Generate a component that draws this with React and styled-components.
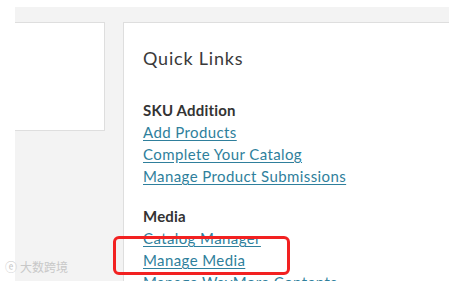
import styled, { createGlobalStyle } from "styled-components";

const GlobalStyle = createGlobalStyle`
  html, body {
    margin: 0;
    padding: 0;
    background: #ffffff;
    height: 100%;
    overflow: hidden;
  }
  #root {
    height: 100%;
  }
`;

const linkColour = "#2f7f9c";
const textColour = "#333333";
const borderColour = "#dedede";

const sections = [
  {
    title: "SKU Addition",
    links: ["Add Products", "Complete Your Catalog", "Manage Product Submissions"],
  },
  {
    title: "Media",
    links: ["Catalog Manager", "Manage Media", "Manage WayMore Contents"],
  },
];

const App = () => {
  return (
    <>
      <GlobalStyle />
      <Page>
        <Panel>
          <SideCard />
          <LinksCard>
            <Heading>Quick Links</Heading>
            {sections.map((section) => (
              <Section key={section.title}>
                <SectionTitle>{section.title}</SectionTitle>
                {section.links.map((link) => (
                  <LinkItem key={link} href="#">
                    {link}
                  </LinkItem>
                ))}
              </Section>
            ))}
            <Highlight />
          </LinksCard>
        </Panel>
        <Watermark>
          <WatermarkIcon>ⓔ</WatermarkIcon>大数跨境
        </Watermark>
      </Page>
    </>
  );
};

// Page styles
const Page = styled.div`
  position: relative;
  height: 100%;
  padding: 7px 20px 0 15px;
  box-sizing: border-box;
  font-family: Lato, "Liberation Sans", sans-serif;
`;

const Panel = styled.div`
  display: flex;
  align-items: flex-start;
  gap: 18px;
  height: 100%;
  padding-top: 15px;
  box-sizing: border-box;
  background: #f3f3f3;
`;

// Card styles
const SideCard = styled.div`
  width: 89px;
  height: 107px;
  background: #ffffff;
  border: 1px solid ${borderColour};
  border-left: none;
`;

const LinksCard = styled.div`
  position: relative;
  flex: 1;
  height: 100%;
  padding: 24px 0 0 19px;
  box-sizing: border-box;
  background: #ffffff;
  border-top: 1px solid ${borderColour};
  border-left: 1px solid ${borderColour};
`;

const Heading = styled.h2`
  margin: 0 0 31px;
  font-size: 18px;
  line-height: 22px;
  font-weight: 400;
  letter-spacing: 0.8px;
  color: #3a3a3a;
`;

const Section = styled.div`
  display: flex;
  flex-direction: column;
  align-items: flex-start;
  margin-bottom: 19px;
`;

const SectionTitle = styled.h3`
  margin: 0;
  font-size: 15px;
  line-height: 21px;
  font-weight: 700;
  letter-spacing: 0.2px;
  color: ${textColour};
`;

const LinkItem = styled.a`
  font-size: 15px;
  line-height: 22px;
  letter-spacing: 0.4px;
  color: ${linkColour};
  text-decoration: underline;
  text-underline-offset: 2px;
`;

// Annotation overlay
const Highlight = styled.div`
  position: absolute;
  left: -11px;
  top: 213px;
  width: 171px;
  height: 33px;
  border: 3px solid #f22121;
  border-radius: 6px;
`;

const Watermark = styled.div`
  position: absolute;
  left: 5px;
  bottom: 6px;
  display: flex;
  align-items: center;
  gap: 3px;
  font-size: 12px;
  color: #c8c8c8;
  font-family: "Noto Sans CJK SC", sans-serif;
`;

const WatermarkIcon = styled.span`
  font-size: 12px;
`;

export default App;
